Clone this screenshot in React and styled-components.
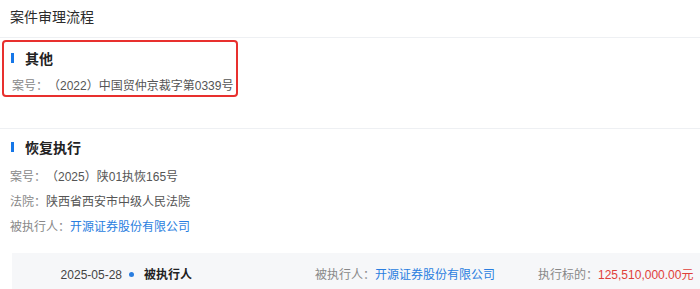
import React from 'react';
import styled, {createGlobalStyle} from 'styled-components';

const Global = createGlobalStyle`
  html, body {
    margin: 0;
    padding: 0;
    background: #fff;
  }
  body {
    font-family: "Liberation Sans", "Noto Sans CJK SC", sans-serif;
    color: #333;
    text-spacing-trim: space-all;
  }
`

const Page = styled.div`
  width: 700px;
  height: 289px;
  overflow: hidden;
  background: #fff;
`

const Header = styled.div`
  height: 38px;
  padding: 7px 0 0 10px;
  box-sizing: border-box;
  border-bottom: 1px solid #eef0f3;
  font-size: 14px;
  line-height: 20px;
  color: #2b2b2b;
`

const Section = styled.div`
  padding: ${p => p.$pad || '0'};
  border-bottom: ${p => (p.$line ? '1px solid #eef0f3' : 'none')};
`

const Highlight = styled.div`
  margin-left: 2px;
  width: 236px;
  height: 57px;
  box-sizing: border-box;
  border: 2px solid #e8302e;
  border-radius: 4px;
  padding: 6px 0 0 7px;
`

const Heading = styled.div`
  display: flex;
  align-items: center;
  height: 20px;
  font-size: 14px;
  font-weight: bold;
  color: #222;
  padding-left: ${p => p.$indent || '0'};

  &::before {
    content: '';
    width: 3px;
    height: 10px;
    background: #1677e8;
    margin-right: 11px;
  }
`

const Line = styled.div`
  font-size: 12px;
  line-height: 16px;
  margin-top: ${p => p.$gap || '9px'};
  padding-left: ${p => p.$indent || '0'};
  color: #555;
  white-space: nowrap;
`

const Label = styled.span`
  color: #888;
`

const Link = styled.span`
  color: #2a7ee0;
`

const Money = styled.span`
  color: #e0403a;
`

const Record = styled.div`
  margin: 18px 0 0 12px;
  height: 60px;
  background: #f6f7f9;
  display: flex;
  align-items: flex-start;
  padding-top: 14px;
  box-sizing: border-box;
  font-size: 12px;
  line-height: 16px;
  white-space: nowrap;
`

const DateCell = styled.div`
  width: 110px;
  text-align: right;
  color: #444;
`

const Dot = styled.span`
  width: 5px;
  height: 5px;
  border-radius: 50%;
  background: #2a7ee0;
  margin: 5px 10px 0 7px;
`

const Role = styled.div`
  width: 171px;
  font-weight: bold;
  color: #222;
`

const Field = styled.div`
  width: ${p => p.$w || 'auto'};
  color: #555;
`

const App = () => (
  <Page>
    <Global />
    <Header>案件审理流程</Header>
    <Section $line $pad="2px 0 31px 0">
      <Highlight>
        <Heading>其他</Heading>
        <Line $gap="10px" $indent="1px"><Label>案号：</Label>（2022）中国贸仲京裁字第0339号</Line>
      </Highlight>
    </Section>
    <Section $pad="8px 0 0 10px">
      <Heading $indent="1px">恢复执行</Heading>
      <Line $gap="12px"><Label>案号：</Label>（2025）陕01执恢165号</Line>
      <Line><Label>法院：</Label>陕西省西安市中级人民法院</Line>
      <Line><Label>被执行人：</Label><Link>开源证券股份有限公司</Link></Line>
    </Section>
    <Record>
      <DateCell>2025-05-28</DateCell>
      <Dot />
      <Role>被执行人</Role>
      <Field $w="223px"><Label>被执行人：</Label><Link>开源证券股份有限公司</Link></Field>
      <Field><Label>执行标的：</Label><Money>125,510,000.00元</Money></Field>
    </Record>
  </Page>
);

export default App;
